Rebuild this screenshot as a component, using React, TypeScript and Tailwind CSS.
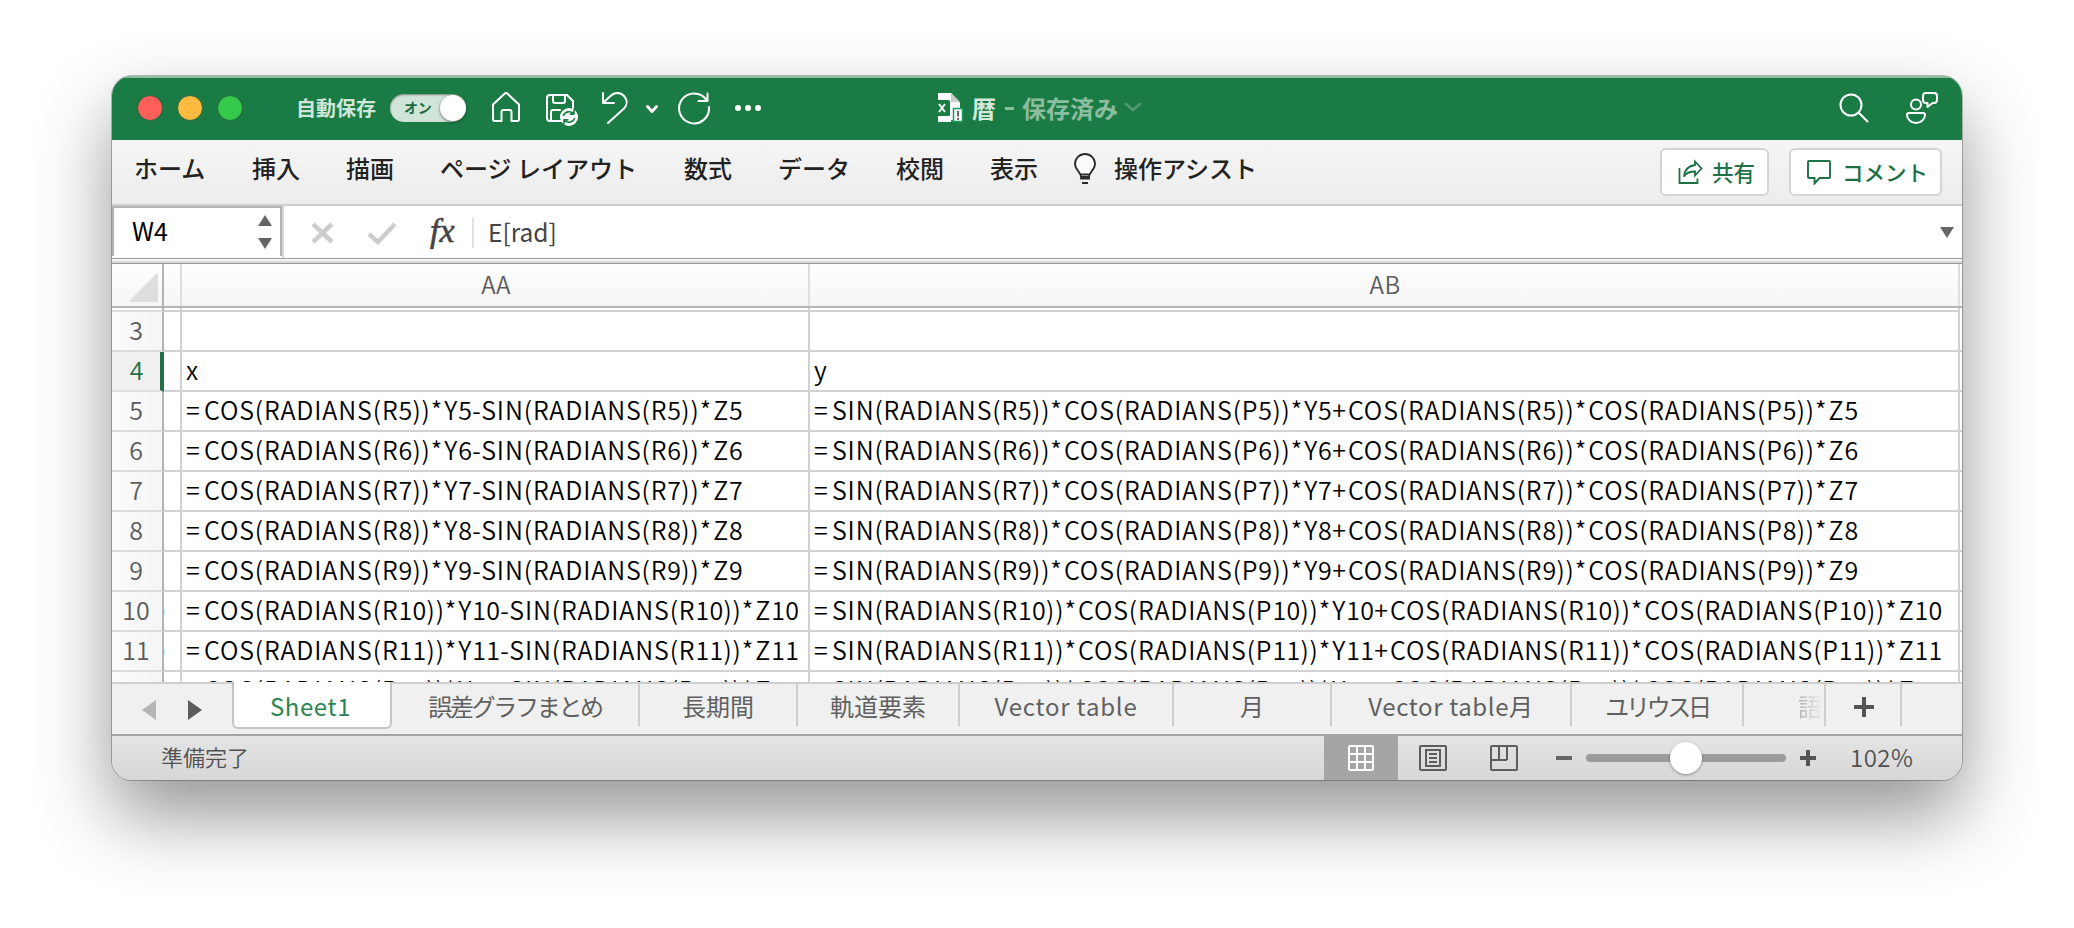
import React from "react";

const JP = "font-['Noto_Sans_CJK_JP',sans-serif]";

const menus: { label: string; w: string }[] = [
  { label: "ホーム", w: "w-[72px]" },
  { label: "挿入", w: "w-[48px]" },
  { label: "描画", w: "w-[48px]" },
  { label: "ページ レイアウト", w: "w-[198px]" },
  { label: "数式", w: "w-[48px]" },
  { label: "データ", w: "w-[72px]" },
  { label: "校閲", w: "w-[48px]" },
  { label: "表示", w: "w-[48px]" },
];

const rows = [5, 6, 7, 8, 9, 10, 11, 12];

const sheets: { label: string; w: string; spacing: string }[] = [
  { label: "誤差グラフまとめ", w: "w-[248px]", spacing: "tracking-[-2.3px]" },
  { label: "長期間", w: "w-[158px]", spacing: "" },
  { label: "軌道要素", w: "w-[162px]", spacing: "" },
  { label: "Vector table", w: "w-[214px]", spacing: "tracking-[0.8px]" },
  { label: "月", w: "w-[158px]", spacing: "" },
  { label: "Vector table月", w: "w-[240px]", spacing: "tracking-[0.6px]" },
  { label: "ユリウス日", w: "w-[172px]", spacing: "tracking-[-3.3px]" },
];

function TitleBar() {
  return (
    <header className="flex h-[64px] shrink-0 items-center border-t-2 border-[#8dbfa2] bg-[#1b7b45] pb-[3px] text-white">
      <div className="flex w-[184px] items-center gap-[14px] pl-[25px]">
        <i className="h-[26px] w-[26px] rounded-full border border-[#27643d] bg-[#fe5f58]" />
        <i className="h-[26px] w-[26px] rounded-full border border-[#27643d] bg-[#febb40]" />
        <i className="h-[26px] w-[26px] rounded-full border border-[#27643d] bg-[#35c94a]" />
      </div>
      <span className="w-[94px] whitespace-nowrap text-[20px] font-bold leading-[30px] text-[#d0e6d9]">自動保存</span>
      <div className="flex h-[28px] w-[76px] items-center justify-between rounded-full bg-[#d0e4d8] pl-[14px] shadow-[inset_0_1px_2px_rgba(0,0,0,0.4)]">
        <span className="text-[14px] font-bold tracking-[-0.3px] text-[#1f6b41]">オン</span>
        <i className="h-[26px] w-[26px] rounded-full bg-white shadow-[0_1px_3px_rgba(0,0,0,0.5)]" />
      </div>
      <svg className="ml-[20px]" width="300" height="40" viewBox="486 88 300 40" fill="none" stroke="#fff" strokeWidth="2" strokeLinecap="round" strokeLinejoin="round">
        <path d="M493 104.500L504.500 93.800a2 2 0 0 1 3 0L519 104.500V119a2 2 0 0 1-2 2h-5.500V112a2 2 0 0 0-2-2h-6a2 2 0 0 0-2 2v9h-6.500a2 2 0 0 1-2-2z" />
        <path d="M562 121h-12a3 3 0 0 1-3-3V98a3 3 0 0 1 3-3h17l6 6v7M553 95v6a2 2 0 0 0 2 2h8a2 2 0 0 0 2-2v-6M551 121v-9a2 2 0 0 1 2-2h7" />
        <circle cx="569" cy="117" r="9" fill="#fff" stroke="none" />
        <path stroke="#1b7b45" strokeWidth="1.600" d="M563.500 115.500c1.500-4 7-5 10-2m.5-3v3.600h-3.800M574.500 118.500c-1.500 4-7 5-10 2m-.5 3v-3.600h3.800" />
        <path d="M603 93v10h11M603.500 102.500l7-6.500c4-4 10-4 13.500 0s3.500 9 0 12.500L608 123" />
        <path strokeWidth="2.800" d="M647.500 106.500l4.500 5 4.500-5" />
        <path d="M707.500 93.500V101h-9M706.500 100A15 15 0 1 0 709 107" />
        <g fill="#fff" stroke="none"><circle cx="738" cy="108" r="3" /><circle cx="748" cy="108" r="3" /><circle cx="758" cy="108" r="3" /></g>
      </svg>
      <svg className="ml-[146px]" width="36" height="36" viewBox="932 90 36 36" fill="none">
        <path fill="#fff" d="M938 93h13l9 10v19h-22z" />
        <path fill="#c9cdca" d="M951 93l9 9h-9z" />
        <rect x="934" y="100" width="16" height="16" rx="1.500" fill="#1b7b45" />
        <path d="M939 104l6 8M945 104l-6 8" stroke="#fff" strokeWidth="2" />
        <path d="M951 120h11v2h-11z" fill="#1b9b5c" />
        <rect x="953.500" y="108.500" width="9" height="13" fill="#fff" stroke="#1b9b5c" strokeWidth="1.500" />
        <path d="M958 111v5.500M958 118v2" stroke="#666" strokeWidth="2" />
      </svg>
      <div className="ml-[4px] flex items-center whitespace-nowrap text-[24px] font-bold leading-[36px]">
        <span className="text-[#d5e9dd]">暦</span>
        <i className="ml-[9px] mr-[8px] mt-[2px] h-[3px] w-[9px] bg-[#8bbd9f]" />
        <span className="text-[#8bbd9f]">保存済み</span>
      </div>
      <svg className="ml-[6px]" width="18" height="12" viewBox="0 0 18 12" fill="none" stroke="#4f9a70" strokeWidth="2.600" strokeLinecap="round"><path d="M2 2l7 6 7-6" /></svg>
      <svg className="ml-auto mr-[20px]" width="106" height="40" viewBox="1836 88 106 40" fill="none" stroke="#fff" strokeWidth="2" strokeLinejoin="round" strokeLinecap="round">
        <circle cx="1851" cy="105" r="10.500" /><path d="M1858.500 112.500l9 9" />
        <circle cx="1916" cy="104.500" r="5" />
        <path d="M1909 113h14a2 2 0 0 1 2 2c0 4-4 8-9 8s-9-4-9-8a2 2 0 0 1 2-2zM1926 93h8a3 3 0 0 1 3 3v4a3 3 0 0 1-3 3h-1.500l-5 4v-4h-1.500a3 3 0 0 1-3-3v-4a3 3 0 0 1 3-3z" />
      </svg>
    </header>
  );
}

function Ribbon() {
  return (
    <nav className="flex h-[66px] shrink-0 border-b-2 border-[#cdcdcd] bg-gradient-to-b from-[#f5f5f5] to-[#ececec] pl-[22px] text-[24px] font-medium text-[#222]">
      <div className="flex gap-[46px] pt-[10px] leading-[36px]">
        {menus.map((m) => (
          <span key={m.label} className={`whitespace-nowrap ${m.w}`}>{m.label}</span>
        ))}
      </div>
      <svg className="ml-[35px] mt-[13px]" width="24" height="34" viewBox="0 0 24 34" fill="#fbfbfb" stroke="#2b2b2b" strokeWidth="1.800">
        <path d="M8 24c0-5-6-7-6-13a10 10 0 0 1 20 0c0 6-6 8-6 13zM8 21.500h8M8 24v1.500h8V24" /><path d="M9 30h6" strokeWidth="2" />
      </svg>
      <span className="ml-[17px] pt-[10px] leading-[36px]">操作アシスト</span>
      <div className="ml-auto flex gap-[20px] pr-[20px] pt-[8px] text-[#1f7145]">
        <div className="flex h-[48px] w-[109px] items-center rounded-[6px] border-2 border-[#d4d4d4] bg-white pl-[15px] text-[21.500px]">
          <svg width="26" height="26" viewBox="0 0 26 26" fill="none" stroke="#1f7145" strokeWidth="1.800"><path d="M2.500 9v15H20.500v-4.500M18 2.500l6.500 7-6.500 7v-4c-5 0-8.500 1-11 5 .5-6 4-10.500 11-11.500z" /></svg>
          <span className="ml-[9px] whitespace-nowrap">共有</span>
        </div>
        <div className="flex h-[48px] w-[153px] items-center rounded-[6px] border-2 border-[#d4d4d4] bg-white pl-[15px] text-[21.500px]">
          <svg width="26" height="26" viewBox="0 0 26 26" fill="none" stroke="#1f7145" strokeWidth="1.900"><path d="M3 2h20a1 1 0 0 1 1 1v15a1 1 0 0 1-1 1h-9.500L8.500 24.500V19H3a1 1 0 0 1-1-1V3a1 1 0 0 1 1-1z" /></svg>
          <span className="ml-[10px] whitespace-nowrap">コメント</span>
        </div>
      </div>
    </nav>
  );
}

function FormulaBar() {
  return (
    <div className="flex h-[58px] shrink-0 flex-col bg-white">
      <div className="flex h-[52px]">
        <div className="flex h-[50px] w-[170px] items-center justify-between border-2 border-b-0 border-[#b2b2b2] bg-white pl-[18px] pr-[7px]">
          <span className="h-[50px] text-[25px] leading-[46px] text-black">W4</span>
          <svg width="16" height="36" viewBox="0 0 16 36" fill="#666"><path d="M1 12L8 1l7 11zM1 24l7 11 7-11z" /></svg>
        </div>
        <i className="h-[52px] w-[2px] bg-[#d3d3d3]" />
        <svg className="ml-[27px] mt-[15px]" width="86" height="24" viewBox="0 0 86 24" fill="none" stroke="#cdcdcd" strokeWidth="4.500"><path d="M2 3l19 18M21 3L2 21M58 13l9 8L84 3" /></svg>
        <span className="ml-[33px] w-[32px] pt-[5px] font-['Liberation_Serif',serif] text-[34px] italic leading-[40px] text-[#444] [-webkit-text-stroke:0.6px_#444]">fx</span>
        <i className="ml-[10px] mt-[12px] h-[30px] w-[2px] bg-[#e0e0e0]" />
        <span className="ml-[14px] pt-[2px] text-[24.500px] leading-[48px] text-[#444]">E[rad]</span>
        <svg className="ml-auto mr-[8px] mt-[20px]" width="14" height="12" viewBox="0 0 14 12" fill="#666"><path d="M0 1h14L7 12z" /></svg>
      </div>
      <div className="h-[6px] border-y border-[#9a9e9b] bg-gradient-to-b from-white to-[#d0d0d0]" />
    </div>
  );
}

function RowHeader({ n, active }: { n: number; active?: boolean }) {
  return (
    <div className={active
      ? "flex h-[40px] w-[52px] shrink-0 justify-center border-b-2 border-r-4 border-b-[#dedede] border-r-[#1f7145] bg-[#f0f0f0] pl-[1px] text-[#1f7145]"
      : "flex h-[40px] w-[52px] shrink-0 justify-center border-b-2 border-r-2 border-b-[#dcdcdc] border-r-[#b3b3b3] bg-gradient-to-r from-[#fbfbfb] to-[#f5f5f5] pr-[2px] text-[#5c5c5c]"}>
      <span className="text-[25px] font-[350] leading-[35px]">{n}</span>
    </div>
  );
}

/* Operators get more room than letters, digits a little less. */
function Formula({ text }: { text: string }) {
  return (
    <span>
      {text.split(/(\d+|[=*+])/).filter(Boolean).map((part, i) => {
        const spacing = part === "=" ? "tracking-[4.2px]"
          : /^[*+]$/.test(part) ? "tracking-[2px]"
          : /^\d/.test(part) ? "tracking-[0.3px]"
          : "tracking-[0.87px]";
        return <span key={i} className={spacing}>{part}</span>;
      })}
    </span>
  );
}

function Row({ n, a, b, tail }: { n: number; a: string; b: string; tail?: boolean }) {
  return (
    <div className="flex h-[40px] shrink-0 text-[25px] font-[350] leading-[35px] text-black">
      <RowHeader n={n} active={n === 4} />
      <div className="h-[40px] w-[18px] shrink-0 overflow-hidden border-b-2 border-r-2 border-[#d2d2d2]">
        {tail && <span className="-ml-[6px] block">)</span>}
      </div>
      <div className="w-[628px] shrink-0 whitespace-nowrap border-b-2 border-r-2 border-[#d2d2d2] pl-[4px]"><Formula text={a} /></div>
      <div className="w-[1150px] shrink-0 whitespace-nowrap border-b-2 border-r-2 border-[#d2d2d2] pl-[4px]"><Formula text={b} /></div>
      <div className="w-[2px] border-b-2 border-[#d2d2d2]" />
    </div>
  );
}

function Grid() {
  return (
    <main className="flex h-[418px] shrink-0 flex-col overflow-hidden bg-white">
      <div className="flex h-[44px] shrink-0 border-b-2 border-[#b5b5b5] bg-gradient-to-b from-white to-[#f5f5f5] text-[24px] font-[350] leading-[40px] tracking-[0.5px] text-[#5c5c5c]">
        <div className="flex w-[52px] shrink-0 items-start justify-end border-r-2 border-[#b3b3b3] pr-[4px] pt-[8px]">
          <svg width="30" height="30" viewBox="0 0 30 30" fill="#dedede"><path d="M30 0v30H0z" /></svg>
        </div>
        <div className="w-[18px] border-r-2 border-[#dedede]" />
        <div className="w-[628px] border-r-2 border-[#dedede] pl-[2px] text-center">AA</div>
        <div className="w-[1150px] border-r-2 border-[#dedede] pl-[2px] text-center">AB</div>
      </div>
      <div className="flex h-[4px] shrink-0">
        <i className="w-[52px] border-b-2 border-r-2 border-b-[#dcdcdc] border-r-[#b3b3b3]" />
        <i className="w-[18px] border-b-2 border-r-2 border-[#d2d2d2]" />
        <i className="w-[628px] border-b-2 border-r-2 border-[#d2d2d2]" />
        <i className="w-[1150px] border-b-2 border-r-2 border-[#d2d2d2]" />
      </div>
      <Row n={3} a="" b="" />
      <Row n={4} a="x" b="y" />
      {rows.map((r) => (
        <Row
          key={r}
          n={r}
          tail={r > 9}
          a={`=COS(RADIANS(R${r}))*Y${r}-SIN(RADIANS(R${r}))*Z${r}`}
          b={`=SIN(RADIANS(R${r}))*COS(RADIANS(P${r}))*Y${r}+COS(RADIANS(R${r}))*COS(RADIANS(P${r}))*Z${r}`}
        />
      ))}
    </main>
  );
}

function SheetTabs() {
  return (
    <div className="flex h-[54px] shrink-0 border-b-2 border-t-2 border-b-[#a3a3a3] border-t-[#cfcfcf] bg-[#f0f0f0] text-[24px] leading-[44px] text-[#606060]">
      <svg className="ml-[29px] mt-[15px] shrink-0" width="62" height="22" viewBox="0 0 62 22"><path fill="#b5b5b5" d="M15 1v20L1 11z" /><path fill="#5c5c5c" d="M47 1v20l14-10z" /></svg>
      <div className="-mt-[2px] ml-[29px] h-[47px] w-[160px] shrink-0 rounded-b-[6px] border-2 border-t-0 border-[#c4c4c4] bg-white pr-[3px] text-center leading-[48px] tracking-[0.6px] text-[#2c8654]">Sheet1</div>
      {sheets.map((s) => (
        <div key={s.label} className={`h-[42px] shrink-0 whitespace-nowrap border-r-2 border-[#cdcdcd] text-center ${s.w} ${s.spacing}`}>{s.label}</div>
      ))}
      <div className="h-[42px] w-[82px] shrink-0 overflow-hidden border-r-2 border-[#cdcdcd] pl-[54px]">
        <span className="bg-gradient-to-r from-[#b0b0b0] to-[#ededed] bg-clip-text text-transparent">語</span>
      </div>
      <div className="flex h-[42px] w-[76px] shrink-0 items-center justify-center border-r-2 border-[#cdcdcd] pl-[2px] pt-[4px]">
        <svg width="20" height="20" viewBox="0 0 20 20" stroke="#555" strokeWidth="4"><path d="M0 10h20M10 0v20" /></svg>
      </div>
    </div>
  );
}

function StatusBar() {
  return (
    <footer className="flex h-[44px] shrink-0 items-center bg-gradient-to-b from-[#e4e4e4] to-[#d7d7d7] pl-[49px] text-[22px] text-[#505050]">
      <span className="h-[34px] font-[350] leading-[30px]">準備完了</span>
      <div className="ml-auto flex h-[44px] w-[74px] items-center justify-center bg-[#a5a5a5]">
        <svg width="26" height="26" viewBox="0 0 26 26" fill="none" stroke="#fff" strokeWidth="2"><rect x="1" y="1" width="24" height="24" rx="1" /><path d="M9 1v24M17 1v24M1 9h24M1 17h24" /></svg>
      </div>
      <svg className="ml-[21px]" width="28" height="26" viewBox="0 0 28 26" fill="none" stroke="#5d5d5d" strokeWidth="2"><rect x="1" y="1" width="26" height="24" rx="1" /><rect x="7" y="5" width="14" height="16" /><path d="M10 9h8M10 13h8M10 17h8" /></svg>
      <svg className="ml-[43px]" width="28" height="26" viewBox="0 0 28 26" fill="none" stroke="#5d5d5d" strokeWidth="2"><rect x="1" y="1" width="26" height="24" rx="1" /><path d="M9 1v14M17 1v14M1 15h16" /></svg>
      <i className="ml-[38px] h-[4px] w-[16px] bg-[#666]" />
      <div className="ml-[14px] flex h-[8px] w-[200px] items-center justify-center rounded-full bg-[#9b9b9b]">
        <i className="h-[32px] w-[32px] rounded-full bg-white shadow-[0_1px_3px_rgba(0,0,0,0.35)]" />
      </div>
      <svg className="ml-[14px]" width="16" height="16" viewBox="0 0 16 16" stroke="#555" strokeWidth="4"><path d="M0 8h16M8 0v16" /></svg>
      <span className="ml-[34px] h-[36px] w-[112px] text-[24px] font-[350] leading-[34px] tracking-[0.5px]">102%</span>
    </footer>
  );
}

export default function App() {
  return (
    <div className={`h-[928px] w-[2074px] overflow-hidden bg-white pl-[112px] pt-[76px] ${JP}`}>
      <div className="flex h-[704px] w-[1850px] flex-col overflow-hidden rounded-[20px] shadow-[0_0_0_1px_rgba(0,0,0,0.25),0_36px_76px_rgba(0,0,0,0.42)]">
        <TitleBar />
        <Ribbon />
        <FormulaBar />
        <Grid />
        <SheetTabs />
        <StatusBar />
      </div>
    </div>
  );
}
